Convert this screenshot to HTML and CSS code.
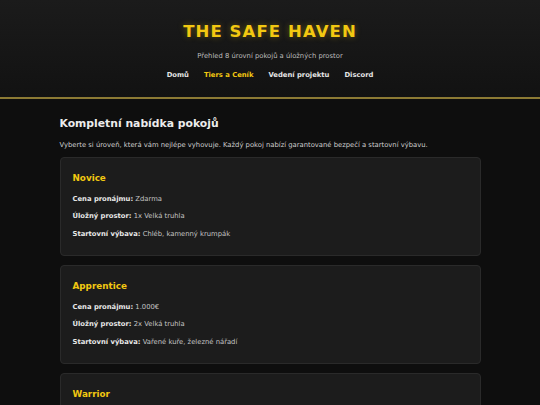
FILE: index.html
```html
<!DOCTYPE html>
<html lang="cs">
<head>
<meta charset="utf-8">
<title>The Safe Haven</title>
<link rel="stylesheet" href="styles.css">
</head>
<body>
<header class="site-header">
  <h1 class="site-title">THE SAFE HAVEN</h1>
  <p class="site-subtitle">Přehled 8 úrovní pokojů a úložných prostor</p>
  <nav class="site-nav">
    <a href="#" class="nav-link">Domů</a>
    <a href="#" class="nav-link active">Tiers a Ceník</a>
    <a href="#" class="nav-link">Vedení projektu</a>
    <a href="#" class="nav-link">Discord</a>
  </nav>
</header>
<main class="content">
  <h2 class="section-title">Kompletní nabídka pokojů</h2>
  <p class="section-intro">Vyberte si úroveň, která vám nejlépe vyhovuje. Každý pokoj nabízí garantované bezpečí a startovní výbavu.</p>
  <div class="tier-list">
    <section class="tier-card">
      <h3 class="tier-name">Novice</h3>
      <p class="tier-row"><strong>Cena pronájmu:</strong> Zdarma</p>
      <p class="tier-row"><strong>Úložný prostor:</strong> 1x Velká truhla</p>
      <p class="tier-row"><strong>Startovní výbava:</strong> Chléb, kamenný krumpák</p>
    </section>
    <section class="tier-card">
      <h3 class="tier-name">Apprentice</h3>
      <p class="tier-row"><strong>Cena pronájmu:</strong> 1.000€</p>
      <p class="tier-row"><strong>Úložný prostor:</strong> 2x Velká truhla</p>
      <p class="tier-row"><strong>Startovní výbava:</strong> Vařené kuře, železné nářadí</p>
    </section>
    <section class="tier-card">
      <h3 class="tier-name">Warrior</h3>
      <p class="tier-row"><strong>Cena pronájmu:</strong> 5.000€</p>
      <p class="tier-row"><strong>Úložný prostor:</strong> 3x Velká truhla</p>
      <p class="tier-row"><strong>Startovní výbava:</strong> Železný meč, štít</p>
    </section>
  </div>
</main>
</body>
</html>
```
FILE: styles.css
```css
* { box-sizing: border-box; }
html, body { margin: 0; padding: 0; }
body {
  background: #0e0e0e;
  color: #d8d8d8;
  font-family: "DejaVu Sans", Verdana, sans-serif;
  font-size: 6.8px;
}
.site-header {
  background: linear-gradient(180deg, #1b1b1b 0%, #121212 100%);
  border-bottom: 2px solid #8c7a34;
  padding: 22px 0 17px;
  text-align: center;
}
.site-title {
  margin: 0;
  font-size: 16.5px;
  line-height: 20px;
  letter-spacing: 1.1px;
  color: #f2c811;
  text-shadow: 0 0 6px rgba(242, 200, 17, 0.35);
}
.site-subtitle {
  margin: 9px 0 0;
  line-height: 10px;
  color: #bdbdbd;
}
.site-nav {
  display: flex;
  justify-content: center;
  gap: 15px;
  margin-top: 9px;
  line-height: 10px;
}
.nav-link {
  color: #e6e6e6;
  font-weight: bold;
  text-decoration: none;
}
.nav-link.active { color: #f2c811; }
.content {
  max-width: 421px;
  margin: 0 auto;
  padding-top: 18px;
}
.section-title {
  margin: 0;
  font-size: 10.8px;
  line-height: 14px;
  color: #ececec;
}
.section-intro {
  margin: 9px 0 7px;
  line-height: 10px;
  color: #cfcfcf;
}
.tier-list {
  display: flex;
  flex-direction: column;
  gap: 9px;
}
.tier-card {
  background: #1c1c1c;
  border: 1px solid #2a2a2a;
  border-radius: 4px;
  padding: 14px 12px 16.5px;
  display: flex;
  flex-direction: column;
  gap: 7.5px;
}
.tier-name {
  margin: 0 0 2px;
  font-size: 8.8px;
  line-height: 12px;
  color: #f2c811;
}
.tier-row {
  margin: 0;
  line-height: 10px;
  color: #c4c4c4;
}
.tier-row strong { color: #e8e8e8; }
```
